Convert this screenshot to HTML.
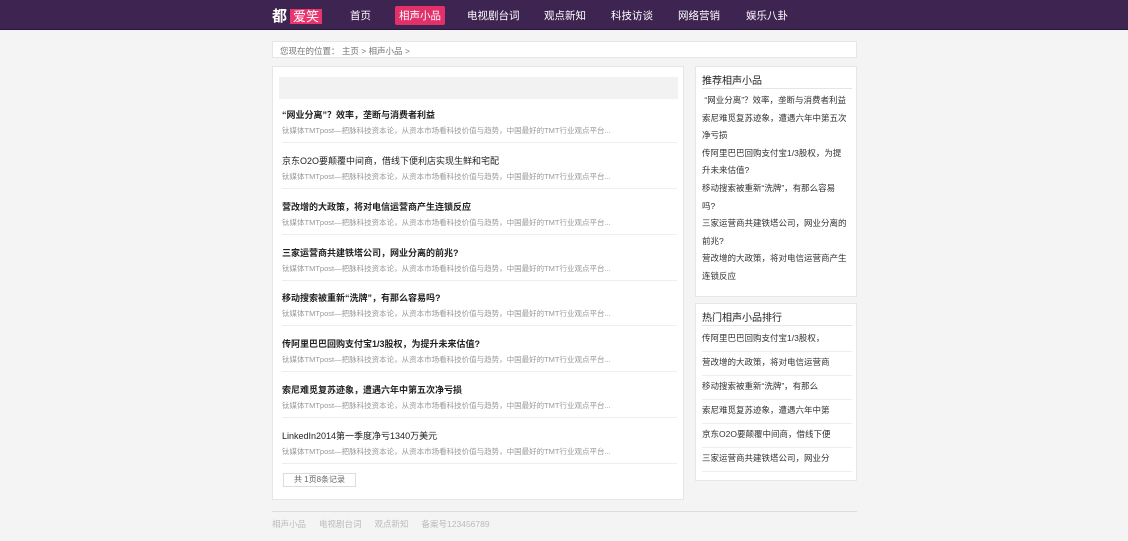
<!DOCTYPE html><html><head><meta charset="utf-8"><style>
*{margin:0;padding:0;box-sizing:border-box}
body{width:1128px;height:541px;background:#f4f4f4;font-family:"Liberation Sans","Noto Sans CJK SC",sans-serif;font-size:9px;color:#333;position:relative;overflow:hidden}
.hd{position:absolute;left:0;top:0;width:1128px;height:30px;background:#3e2450;border-bottom:1px solid #2a1838}
.logo{position:absolute;left:272px;top:5px;color:#fff;font-size:15px;font-weight:bold}
.logo span{background:#e8356d;padding:0 3px;margin-left:3px;font-weight:normal;font-size:13px}
.nav a{position:absolute;top:8px;color:#fff;font-size:10.5px;text-decoration:none}
.nav a.on{background:#e2306b;padding:2px 4px;top:6px;border-radius:2px}
.box{position:absolute;background:#fff;border:1px solid #e6e6e6}
.bc{left:272px;top:41px;width:585px;height:17px;color:#777;font-size:8.5px;padding:3px 7px}
.main{left:272px;top:66px;width:412px;height:434px}
.bar{position:absolute;left:6px;top:10px;width:399px;height:22px;background:#f2f2f2}
.it{position:absolute;left:9px;width:395px;height:34px;border-bottom:1px solid #eee}
.it b{position:absolute;top:-1px;font-size:9px;color:#222}
.it i{position:absolute;top:16px;font-style:normal;font-size:7.5px;color:#999}
.pg{position:absolute;left:10px;top:406px;width:73px;height:14px;border:1px solid #ddd;color:#666;font-size:8px;text-align:center;line-height:12px}
.s1{left:695px;top:66px;width:162px;height:231px}
.s2{left:695px;top:303px;width:162px;height:178px}
.st{position:absolute;left:6px;top:5px;font-size:10px;color:#222;width:150px;border-bottom:1px solid #e5e5e5;height:17px}
.l1{position:absolute;left:6px;top:25px;width:146px;font-size:8.5px;line-height:17.6px;color:#333}
.l2 div{position:absolute;left:6px;width:150px;height:24px;font-size:8.5px;line-height:20px;border-bottom:1px solid #eee;white-space:nowrap;overflow:hidden}
.ft{position:absolute;left:272px;top:511px;width:585px;border-top:1px solid #ddd;color:#bbb;font-size:8.5px;padding-top:6px}
.ft span{margin-right:13px}
</style></head><body>
<div class="hd"><div class="logo">都<span>爱笑</span></div>
<div class="nav"><a style="left:350px">首页</a><a class="on" style="left:395px">相声小品</a><a style="left:467px">电视剧台词</a><a style="left:544px">观点新知</a><a style="left:611px">科技访谈</a><a style="left:678px">网络营销</a><a style="left:746px">娱乐八卦</a></div></div>
<div class="box bc">您现在的位置： 主页 &gt; 相声小品 &gt;</div>
<div class="box main"><div class="bar"></div>
<div class="it" style="top:42px"><b>“网业分离”？效率，垄断与消费者利益</b><i>钛媒体TMTpost—把脉科技资本论，从资本市场看科技价值与趋势，中国最好的TMT行业观点平台...</i></div>
<div class="it" style="top:88px"><b style="font-weight:normal">京东O2O要颠覆中间商，借线下便利店实现生鲜和宅配</b><i>钛媒体TMTpost—把脉科技资本论，从资本市场看科技价值与趋势，中国最好的TMT行业观点平台...</i></div>
<div class="it" style="top:134px"><b>营改增的大政策，将对电信运营商产生连锁反应</b><i>钛媒体TMTpost—把脉科技资本论，从资本市场看科技价值与趋势，中国最好的TMT行业观点平台...</i></div>
<div class="it" style="top:180px"><b>三家运营商共建铁塔公司，网业分离的前兆?</b><i>钛媒体TMTpost—把脉科技资本论，从资本市场看科技价值与趋势，中国最好的TMT行业观点平台...</i></div>
<div class="it" style="top:225px"><b>移动搜索被重新“洗牌”，有那么容易吗?</b><i>钛媒体TMTpost—把脉科技资本论，从资本市场看科技价值与趋势，中国最好的TMT行业观点平台...</i></div>
<div class="it" style="top:271px"><b>传阿里巴巴回购支付宝1/3股权，为提升未来估值?</b><i>钛媒体TMTpost—把脉科技资本论，从资本市场看科技价值与趋势，中国最好的TMT行业观点平台...</i></div>
<div class="it" style="top:317px"><b>索尼难觅复苏迹象，遭遇六年中第五次净亏损</b><i>钛媒体TMTpost—把脉科技资本论，从资本市场看科技价值与趋势，中国最好的TMT行业观点平台...</i></div>
<div class="it" style="top:363px"><b style="font-weight:normal">LinkedIn2014第一季度净亏1340万美元</b><i>钛媒体TMTpost—把脉科技资本论，从资本市场看科技价值与趋势，中国最好的TMT行业观点平台...</i></div>
<div class="pg">共 1页8条记录</div></div>
<div class="box s1"><div class="st">推荐相声小品</div><div class="l1">&nbsp;“网业分离”？效率，垄断与消费者利益<br>索尼难觅复苏迹象，遭遇六年中第五次净亏损<br>传阿里巴巴回购支付宝1/3股权，为提升未来估值?<br>移动搜索被重新“洗牌”，有那么容易吗?<br>三家运营商共建铁塔公司，网业分离的前兆?<br>营改增的大政策，将对电信运营商产生连锁反应</div></div>
<div class="box s2"><div class="st">热门相声小品排行</div><div class="l2">
<div style="top:24px">传阿里巴巴回购支付宝1/3股权，</div>
<div style="top:48px">营改增的大政策，将对电信运营商</div>
<div style="top:72px">移动搜索被重新“洗牌”，有那么</div>
<div style="top:96px">索尼难觅复苏迹象，遭遇六年中第</div>
<div style="top:120px">京东O2O要颠覆中间商，借线下便</div>
<div style="top:144px">三家运营商共建铁塔公司，网业分</div></div></div>
<div class="ft"><span>相声小品</span><span>电视剧台词</span><span>观点新知</span><span>备案号123456789</span></div>
</body></html>
